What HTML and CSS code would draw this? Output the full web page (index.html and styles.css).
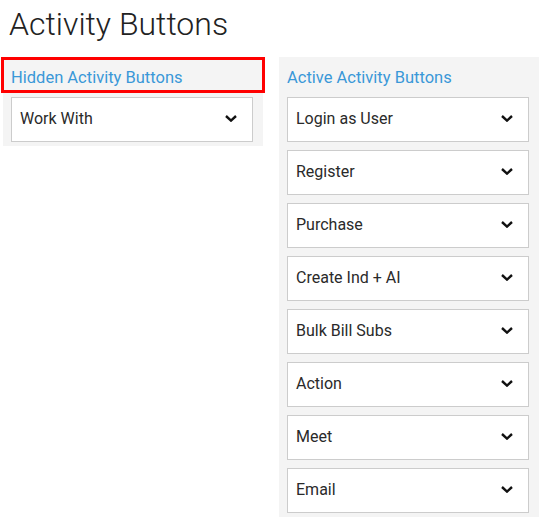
FILE: index.html
```html
<!DOCTYPE html>
<html>
<head>
<meta charset="utf-8">
<link rel="stylesheet" href="styles.css">
</head>
<body>
<h1 class="title">Activity Buttons</h1>
<div class="columns">
  <section class="panel">
    <div class="panel-head selected">Hidden Activity Buttons</div>
    <div class="list">
      <div class="dropdown"><span>Work With</span><svg class="chev" viewBox="0 0 12 7" width="12" height="7"><polyline points="1,1 6,5.6 11,1"/></svg></div>
    </div>
  </section>
  <section class="panel">
    <div class="panel-head">Active Activity Buttons</div>
    <div class="list">
      <div class="dropdown"><span>Login as User</span><svg class="chev" viewBox="0 0 12 7" width="12" height="7"><polyline points="1,1 6,5.6 11,1"/></svg></div>
      <div class="dropdown"><span>Register</span><svg class="chev" viewBox="0 0 12 7" width="12" height="7"><polyline points="1,1 6,5.6 11,1"/></svg></div>
      <div class="dropdown"><span>Purchase</span><svg class="chev" viewBox="0 0 12 7" width="12" height="7"><polyline points="1,1 6,5.6 11,1"/></svg></div>
      <div class="dropdown"><span>Create Ind + AI</span><svg class="chev" viewBox="0 0 12 7" width="12" height="7"><polyline points="1,1 6,5.6 11,1"/></svg></div>
      <div class="dropdown"><span>Bulk Bill Subs</span><svg class="chev" viewBox="0 0 12 7" width="12" height="7"><polyline points="1,1 6,5.6 11,1"/></svg></div>
      <div class="dropdown"><span>Action</span><svg class="chev" viewBox="0 0 12 7" width="12" height="7"><polyline points="1,1 6,5.6 11,1"/></svg></div>
      <div class="dropdown"><span>Meet</span><svg class="chev" viewBox="0 0 12 7" width="12" height="7"><polyline points="1,1 6,5.6 11,1"/></svg></div>
      <div class="dropdown"><span>Email</span><svg class="chev" viewBox="0 0 12 7" width="12" height="7"><polyline points="1,1 6,5.6 11,1"/></svg></div>
    </div>
  </section>
</div>
</body>
</html>
```
FILE: styles.css
```css
html, body {
  margin: 0;
  padding: 0;
  background: #fff;
  overflow: hidden;
}
body {
  font-family: Roboto, "Noto Sans", sans-serif;
  color: #2a2a2a;
}
.title {
  margin: 4px 0 0 9px;
  font-size: 32px;
  font-weight: 300;
  line-height: 40px;
  color: #222;
}
.columns {
  display: flex;
  gap: 16px;
  margin-top: 13px;
  padding-left: 3px;
  align-items: flex-start;
}
.panel {
  width: 260px;
  background: #f4f4f4;
  padding-bottom: 4px;
}
.panel-head {
  height: 36px;
  box-sizing: border-box;
  padding: 8px 0 0 8px;
  font-size: 16.5px;
  line-height: 26px;
  color: #3a98d8;
}
.panel-head.selected {
  margin: 0 -2px;
  border: 3px solid #f00;
  padding: 5px 0 0 7px;
}
.list {
  display: flex;
  flex-direction: column;
  gap: 8px;
  padding: 4px 10px 0 8px;
}
.dropdown {
  height: 45px;
  box-sizing: border-box;
  border: 1px solid #ccc;
  background: #fff;
  display: flex;
  align-items: center;
  justify-content: space-between;
  padding: 0 15px 2px 8px;
  font-size: 16px;
  color: #2a2a2a;
}
.chev {
  display: block;
  fill: none;
  stroke: #111;
  stroke-width: 2.4;
}
```
